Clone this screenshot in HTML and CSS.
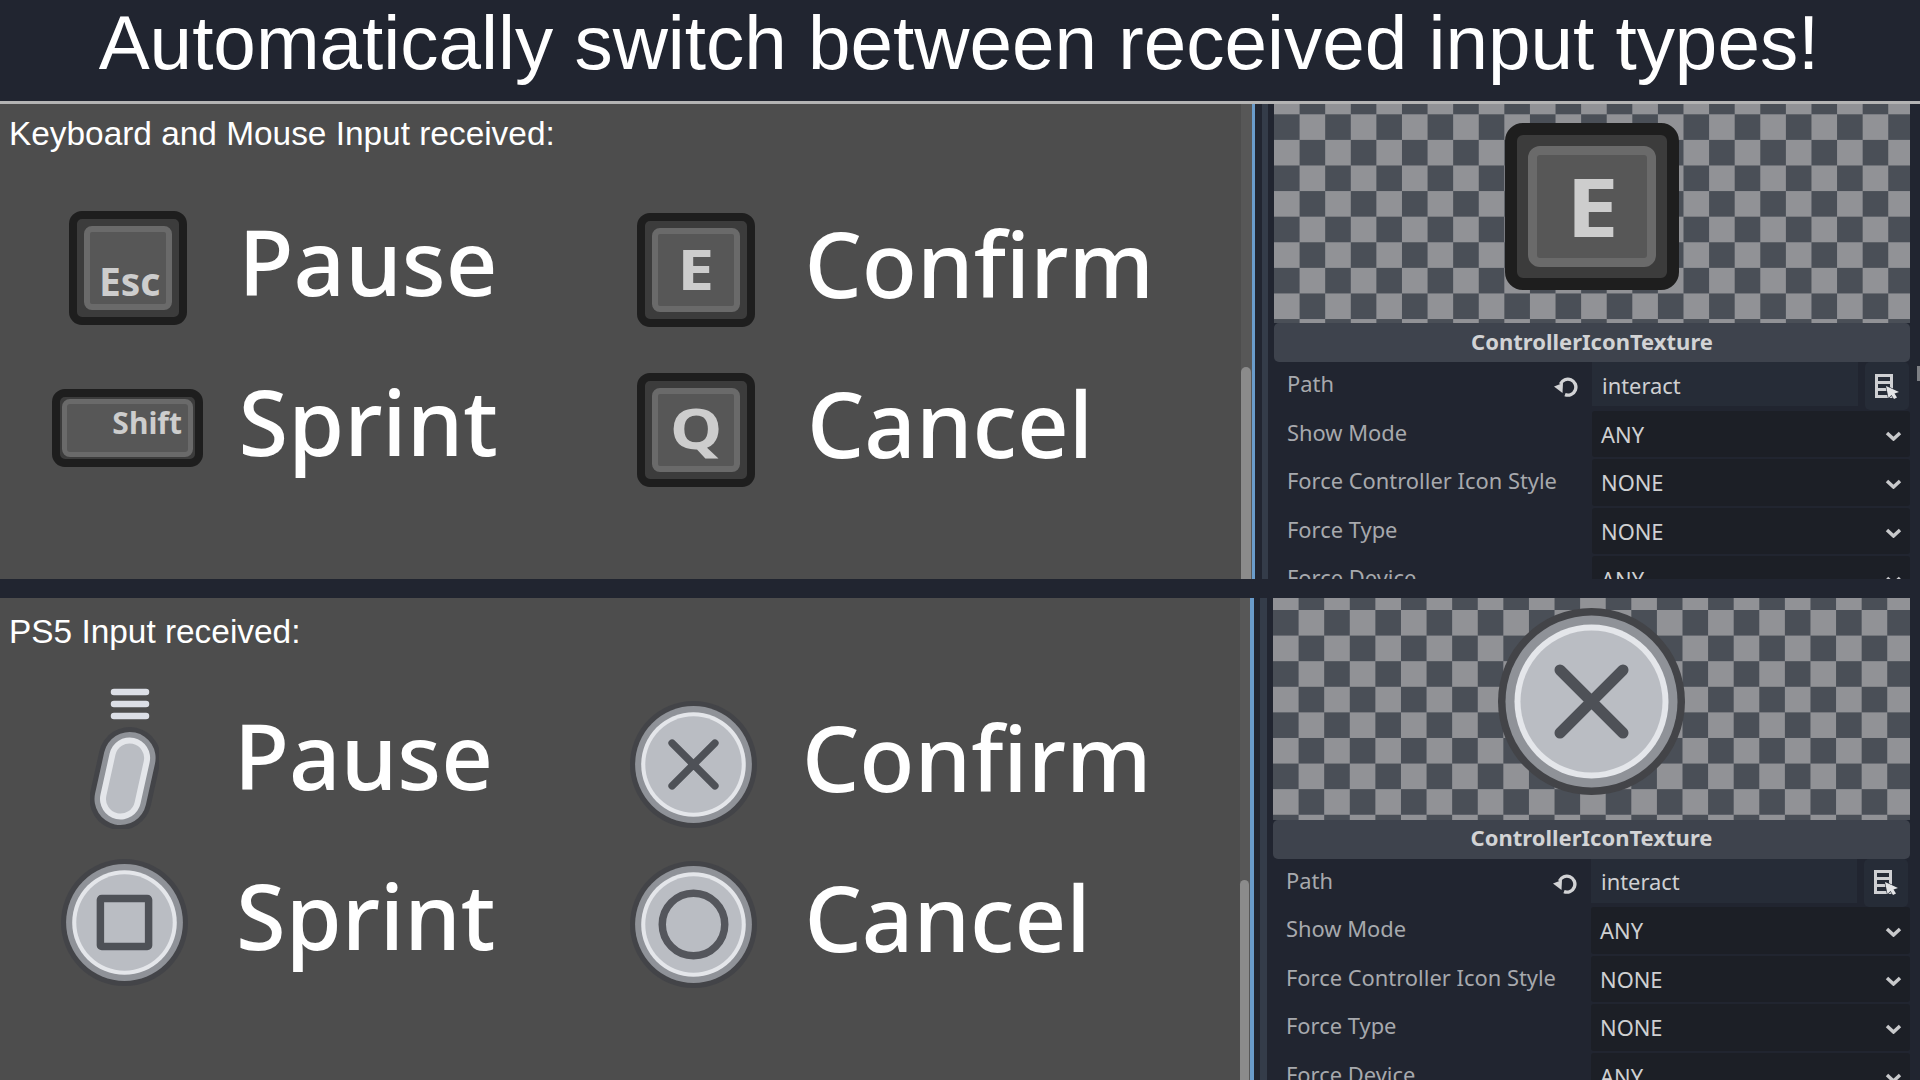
FILE: index.html
```html
<!DOCTYPE html>
<html lang="en">
<head>
<meta charset="utf-8">
<title>Automatically switch between received input types</title>
<link rel="stylesheet" href="styles.css">
</head>
<body>
<svg class="defs" aria-hidden="true">
  <symbol id="pad" viewBox="0 0 187 187">
    <circle cx="93.5" cy="93.5" r="93.5" fill="#434448"/>
    <circle cx="93.5" cy="93.5" r="86" fill="#8f9298"/>
    <circle cx="93.5" cy="93.5" r="77" fill="#e4e6ea"/>
    <circle cx="93.5" cy="93.5" r="71" fill="#babdc3"/>
  </symbol>
  <symbol id="cross" viewBox="0 0 187 187">
    <use href="#pad"/>
    <path d="M62 62 125 125M125 62 62 125" fill="none" stroke="#4e5157" stroke-width="11" stroke-linecap="round"/>
  </symbol>
  <symbol id="revert" viewBox="0 0 24 20">
    <path d="M11 17.6A8 8 0 1 0 6.5 7" fill="none" stroke="#d2d3d5" stroke-width="3.400"/>
    <path d="M0 9.500 9 6 8.500 16z" fill="#d2d3d5"/>
  </symbol>
  <symbol id="picker" viewBox="0 0 25 25">
    <path d="M0 0H18V24H0zM3 3V7H15V3zM3 10V14H15V10zM3 17V21H15V17z" fill="#cfd0d3" fill-rule="evenodd"/>
    <path d="M11 12 24 18 19.500 19.500 22 23.500 19 25 16.500 21 13.500 24z" fill="#e4e5e7" stroke="#262c37" stroke-width="1.200" paint-order="stroke"/>
  </symbol>
  <symbol id="chev" viewBox="0 0 17 10">
    <path d="M2 2 8.500 8 15 2" fill="none" stroke="#c8c9cb" stroke-width="3.500"/>
  </symbol>
</svg>

<header class="banner">
  <h1 class="banner-title">Automatically switch between received input types!</h1>
</header>

<section class="shot shot-upper">
  <div class="game">
    <p class="caption">Keyboard and Mouse Input received:</p>
    <div class="actions">
      <div class="action">
        <div class="glyph"><div class="key key-esc"><div class="cap cap-end"><span>Esc</span></div></div></div>
        <span class="label">Pause</span>
      </div>
      <div class="action action-right">
        <div class="glyph"><div class="key"><div class="cap cap-letter"><span class="wide">E</span></div></div></div>
        <span class="label label-confirm">Confirm</span>
      </div>
      <div class="action">
        <div class="glyph"><div class="key key-shift"><div class="cap cap-shift"><span>Shift</span></div></div></div>
        <span class="label">Sprint</span>
      </div>
      <div class="action action-right">
        <div class="glyph"><div class="key"><div class="cap cap-q"><span class="wide">Q</span></div></div></div>
        <span class="label">Cancel</span>
      </div>
    </div>
  </div>
  <div class="vscroll"><div class="vthumb"></div></div>
  <div class="focus-line"></div>
  <div class="dock-gap"></div>
  <div class="dock-edge"></div>
  <aside class="inspector">
    <div class="preview">
      <div class="key key-large"><div class="cap"><span class="wide">E</span></div></div>
    </div>
    <div class="section-title">ControllerIconTexture</div>
    <div class="prop">
      <span class="prop-name">Path</span>
      <svg class="revert"><use href="#revert"/></svg>
      <div class="prop-edit"><span class="field">interact</span><span class="pick"><svg class="picker"><use href="#picker"/></svg></span></div>
    </div>
    <div class="prop"><span class="prop-name">Show Mode</span><div class="select"><span>ANY</span><svg class="chev"><use href="#chev"/></svg></div></div>
    <div class="prop"><span class="prop-name">Force Controller Icon Style</span><div class="select"><span>NONE</span><svg class="chev"><use href="#chev"/></svg></div></div>
    <div class="prop"><span class="prop-name">Force Type</span><div class="select"><span>NONE</span><svg class="chev"><use href="#chev"/></svg></div></div>
    <div class="prop"><span class="prop-name">Force Device</span><div class="select"><span>ANY</span><svg class="chev"><use href="#chev"/></svg></div></div>
  </aside>
  <div class="outer-scroll"><div class="outer-thumb"></div></div>
</section>

<div class="divider"></div>

<section class="shot shot-lower">
  <div class="game">
    <p class="caption">PS5 Input received:</p>
    <div class="actions">
      <div class="action">
        <div class="glyph">
          <svg class="icon-options" viewBox="0 0 69 141">
            <path d="M24 4H56M24 16H56M24 28H56" fill="none" stroke="#dcdfe6" stroke-width="6.500" stroke-linecap="round"/>
            <g fill="none" stroke-linecap="round">
              <path d="M39.600 70 30.500 111" stroke="#434448" stroke-width="62"/>
              <path d="M39.600 70 30.500 111" stroke="#8f9298" stroke-width="52"/>
              <path d="M39.600 70 30.500 111" stroke="#e4e6ea" stroke-width="41"/>
              <path d="M39.600 70 30.500 111" stroke="#babdc3" stroke-width="29"/>
            </g>
          </svg>
        </div>
        <span class="label label-pause-pad">Pause</span>
      </div>
      <div class="action action-right">
        <div class="glyph"><svg class="pad"><use href="#cross"/></svg></div>
        <span class="label label-confirm">Confirm</span>
      </div>
      <div class="action">
        <div class="glyph">
          <svg class="pad pad-square" viewBox="0 0 187 187">
            <use href="#pad"/>
            <rect x="58" y="58" width="71" height="71" rx="2" fill="none" stroke="#4e5157" stroke-width="11"/>
          </svg>
        </div>
        <span class="label">Sprint</span>
      </div>
      <div class="action action-right">
        <div class="glyph">
          <svg class="pad" viewBox="0 0 187 187">
            <use href="#pad"/>
            <circle cx="93.5" cy="93.5" r="46" fill="none" stroke="#54565c" stroke-width="11"/>
          </svg>
        </div>
        <span class="label">Cancel</span>
      </div>
    </div>
  </div>
  <div class="vscroll"><div class="vthumb"></div></div>
  <div class="focus-line"></div>
  <div class="dock-gap"></div>
  <div class="dock-edge"></div>
  <aside class="inspector">
    <div class="preview">
      <svg class="pad-large"><use href="#cross"/></svg>
    </div>
    <div class="section-title">ControllerIconTexture</div>
    <div class="prop">
      <span class="prop-name">Path</span>
      <svg class="revert"><use href="#revert"/></svg>
      <div class="prop-edit"><span class="field">interact</span><span class="pick"><svg class="picker"><use href="#picker"/></svg></span></div>
    </div>
    <div class="prop"><span class="prop-name">Show Mode</span><div class="select"><span>ANY</span><svg class="chev"><use href="#chev"/></svg></div></div>
    <div class="prop"><span class="prop-name">Force Controller Icon Style</span><div class="select"><span>NONE</span><svg class="chev"><use href="#chev"/></svg></div></div>
    <div class="prop"><span class="prop-name">Force Type</span><div class="select"><span>NONE</span><svg class="chev"><use href="#chev"/></svg></div></div>
    <div class="prop"><span class="prop-name">Force Device</span><div class="select"><span>ANY</span><svg class="chev"><use href="#chev"/></svg></div></div>
  </aside>
  <div class="outer-scroll"></div>
</section>
</body>
</html>
```

FILE: styles.css
```css
* { box-sizing: border-box; }
html, body { margin: 0; padding: 0; }
body {
  width: 1920px;
  height: 1080px;
  overflow: hidden;
  background: #212530;
  font-family: "Noto Sans", sans-serif;
}
.defs { position: absolute; width: 0; height: 0; }

.banner {
  height: 103.5px;
  padding: 0 2px 15px 0;
  display: flex;
  align-items: center;
  justify-content: center;
  background: #212530;
  border-bottom: 3.5px solid #b4b4b4;
}
.banner-title {
  margin: 0;
  font: 400 76.45px/1 "Liberation Sans", Arial, sans-serif;
  color: #fff;
  white-space: nowrap;
}

.shot { display: flex; overflow: hidden; }
.shot-upper { height: 475px; --game: 1241px; --scroll: 11px; --blue: 3px; --gap: 7px; --edge: 6px; --pad: 6px; --top: -15.3px; --start: 30px; --thumb: 263px; --preview: 219.7px; --cap-top: 10px; }
.shot-lower { height: 482px; --game: 1240px; --scroll: 10px; --blue: 4px; --gap: 6px; --edge: 7px; --pad: 6px; --top: -13.6px; --start: 27.5px; --thumb: 282px; --preview: 221.5px; --cap-top: 14px; }
.divider { height: 19.5px; background: #212530; }

.game { width: var(--game); flex: none; background: #4d4d4d; }
.caption {
  margin: 0;
  height: 85px;
  padding: var(--cap-top) 0 0 9px;
  font: 400 33.4px/40px "Liberation Sans", Arial, sans-serif;
  color: #fff;
}
.actions {
  display: grid;
  grid-template-columns: 568.5px 1fr;
  grid-auto-rows: 160px;
  padding-left: var(--start);
}
.action { display: flex; align-items: center; }
.action-right { padding-top: 4px; }
.glyph { width: 195px; flex: none; margin: 0 13.5px 2px 0; display: flex; justify-content: center; align-items: center; }
.label { font-size: 90.3px; line-height: 124px; color: #fff; padding-bottom: 15.6px; font-weight: 500; white-space: nowrap; font-variant-ligatures: none; }
.label-confirm { margin-left: -2.5px; }
.label-pause-pad { margin-left: -2px; }

.key {
  width: 118px;
  height: 114px;
  flex: none;
  display: flex;
  padding: 7px;
  background: #3c3c3c;
  border: 8px solid #1e1e1e;
  border-radius: 13px;
}
.cap {
  flex: 1;
  display: flex;
  align-items: center;
  justify-content: center;
  background: #575757;
  border: 6px solid #6a6a6a;
  border-radius: 8px;
  color: #cdcdcd;
  font-weight: 700;
  font-size: 56px;
  line-height: 1;
}
.wide { display: inline-block; transform: scaleX(1.18); }
.cap-letter { padding-bottom: 3px; }
.cap-q { padding-bottom: 6px; }
.cap-end { align-items: flex-end; justify-content: flex-end; font-size: 39px; padding: 0 5px 4px 0; }
.key-shift { width: 151px; height: 78px; padding: 2px; }
.cap-shift { justify-content: flex-end; font-size: 30px; border-width: 5px; padding: 0 6px 10px 0; }

.key-large { width: 174px; height: 167px; padding: 11px; border-width: 12px; border-radius: 18px; }
.key-large .cap { border-width: 9px; border-radius: 12px; font-size: 80px; }

.pad { width: 127px; height: 127px; display: block; }
.pad-square { margin-right: 2px; }
.pad-large { width: 187px; height: 187px; display: block; }
.icon-options { width: 69px; height: 141px; margin: 0 2px 7px 0; display: block; }

.vscroll {
  width: var(--scroll);
  flex: none;
  padding: var(--thumb) 1px 0 0;
  background: #575757;
}
.vthumb { height: 100%; background: #8b8b8b; border-radius: 5px 5px 0 0; }
.focus-line { width: var(--blue); flex: none; background: #6a9ccb; }
.dock-gap { width: var(--gap); flex: none; background: #212530; }
.dock-edge { width: var(--edge); flex: none; background: #343c49; }

.inspector {
  flex: 1;
  min-width: 0;
  padding: 0 0 0 var(--pad);
  background: #212530;
  overflow: hidden;
}
.preview {
  height: var(--preview);
  padding-bottom: 14px;
  display: flex;
  align-items: center;
  justify-content: center;
  background: repeating-conic-gradient(#4a4f57 0 25%, #919296 0 50%) 0 var(--top) / 51.2px 51.2px;
}
.section-title {
  height: 39px;
  display: flex;
  align-items: center;
  justify-content: center;
  padding-bottom: 4px;
  background: #3e434d;
  border-radius: 5px;
  color: #d2d3d5;
  font-size: 22px;
  font-weight: 700;
}
.prop { display: flex; height: 48.5px; align-items: flex-start; position: relative; }
.prop-name {
  width: 318px;
  flex: none;
  height: 46.5px;
  padding-left: 13px;
  display: flex;
  align-items: center;
  padding-bottom: 3px;
  color: #a7a9ad;
  font-size: 21.9px;
  white-space: nowrap;
}
.revert { position: absolute; left: 280px; top: 15px; width: 24px; height: 20px; }
.prop-edit { flex: 1; display: flex; gap: 7px; }
.field {
  width: 266px;
  height: 44px;
  padding: 2px 0 0 10px;
  display: flex;
  align-items: center;
  background: #262c37;
  color: #cfd0d2;
  font-size: 21.9px;
}
.pick {
  width: 44px;
  height: 48px;
  display: flex;
  align-items: center;
  justify-content: center;
  background: #262c37;
  border-radius: 5px;
}
.picker { width: 25px; height: 25px; margin-left: 1px; display: block; }
.select {
  flex: 1;
  height: 46.5px;
  padding: 1px 8px 0 9px;
  display: flex;
  align-items: center;
  justify-content: space-between;
  background: #1c1f26;
  border-radius: 3px;
  color: #cfd0d2;
  font-size: 21.9px;
}
.chev { width: 17px; height: 10px; display: block; margin-top: 3px; }

.outer-scroll { width: 10px; flex: none; padding: 262px 0 0 7px; background: #212530; }
.outer-thumb { height: 15px; background: #7d7f84; }
```
